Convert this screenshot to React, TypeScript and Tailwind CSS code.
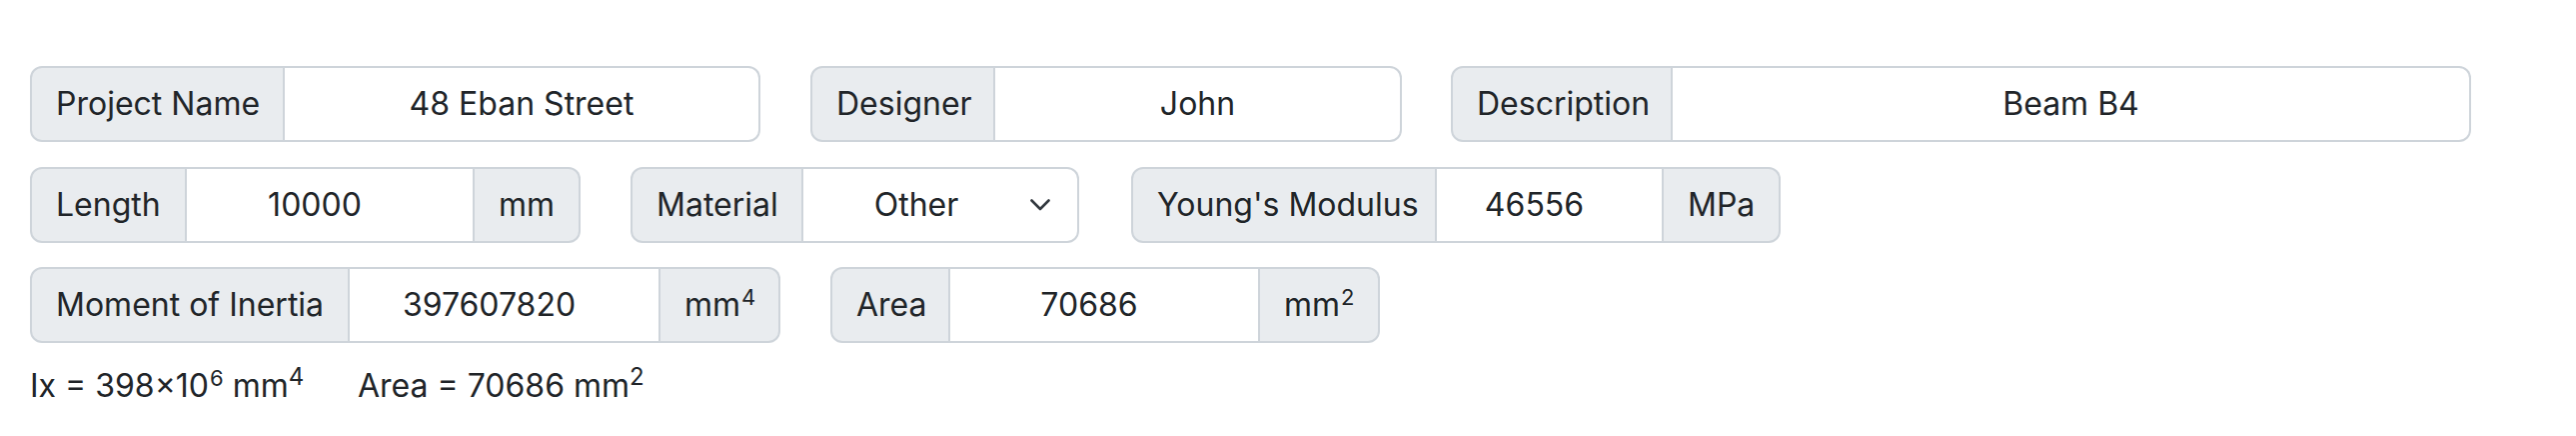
import React from "react";

const font = { fontFamily: "Inter, 'Noto Sans', sans-serif" };

function Label({ w, children }: { w: string; children: React.ReactNode }) {
  return (
    <div
      className={`${w} h-[76px] shrink-0 flex items-center px-[24px] bg-[#e9ecef] border-2 border-[#ced4da] rounded-l-[12px] text-[32px] leading-[48px] text-[#212529] whitespace-nowrap`}
    >
      {children}
    </div>
  );
}

function Field({ w, children, last, num }: { w: string; children: React.ReactNode; last?: boolean; num?: boolean }) {
  return (
    <div
      className={`${w} h-[76px] shrink-0 flex items-center justify-center bg-white border-2 border-l-0 border-[#ced4da] text-[32px] leading-[48px] text-[#212529] whitespace-nowrap pl-[24px] ${num ? "pr-[54px]" : "pr-[24px]"} ${last ? "rounded-r-[12px]" : ""}`}
    >
      {children}
    </div>
  );
}

function Addon({ w, children }: { w: string; children: React.ReactNode }) {
  return (
    <div
      className={`${w} h-[76px] shrink-0 flex items-center px-[24px] bg-[#e9ecef] border-2 border-l-0 border-[#ced4da] rounded-r-[12px] text-[32px] leading-[48px] text-[#212529] whitespace-nowrap`}
    >
      <span>{children}</span>
    </div>
  );
}

function SmallSup({ children }: { children: React.ReactNode }) {
  return <span className="text-[22px] leading-none align-[11px] ml-[1px]">{children}</span>;
}

export default function App() {
  return (
    <div className="w-[2578px] h-[436px] bg-white pt-[66px] pl-[30px]" style={font}>
      <div className="flex flex-col gap-[24.5px]">
        <div className="flex">
          <div className="flex">
            <Label w="w-[255px]">Project Name</Label>
            <Field w="w-[476px]" last>48 Eban Street</Field>
          </div>
          <div className="flex ml-[50px]">
            <Label w="w-[185px]">Designer</Label>
            <Field w="w-[407px]" last>John</Field>
          </div>
          <div className="flex ml-[49px]">
            <Label w="w-[222px]">Description</Label>
            <Field w="w-[799px]" last>Beam B4</Field>
          </div>
        </div>

        <div className="flex">
          <div className="flex">
            <Label w="w-[157px]">Length</Label>
            <Field w="w-[288px]" num>10000</Field>
            <Addon w="w-[106px]">mm</Addon>
          </div>
          <div className="flex ml-[50px]">
            <Label w="w-[173px]">Material</Label>
            <div className="relative w-[276px] h-[76px] shrink-0 flex items-center justify-center bg-white border-2 border-l-0 border-[#ced4da] rounded-r-[12px] text-[32px] leading-[48px] text-[#212529] pl-[24px] pr-[72px]">
              Other
              <svg
                className="absolute right-[27px] top-1/2 -translate-y-1/2"
                width="20"
                height="12"
                viewBox="0 0 20 12"
                fill="none"
              >
                <path d="M1.5 1.5 10 10 18.5 1.5" stroke="#343a40" strokeWidth="2.6" strokeLinecap="round" strokeLinejoin="round" />
              </svg>
            </div>
          </div>
          <div className="flex ml-[52px]">
            <Label w="w-[306px]">Young's Modulus</Label>
            <Field w="w-[227px]" num>46556</Field>
            <Addon w="w-[117px]">MPa</Addon>
          </div>
        </div>

        <div className="flex">
          <div className="flex">
            <Label w="w-[320px]">Moment of Inertia</Label>
            <Field w="w-[311px]" num>397607820</Field>
            <Addon w="w-[120px]">
              mm<SmallSup>4</SmallSup>
            </Addon>
          </div>
          <div className="flex ml-[50px]">
            <Label w="w-[120px]">Area</Label>
            <Field w="w-[310px]" num>70686</Field>
            <Addon w="w-[120px]">
              mm<SmallSup>2</SmallSup>
            </Addon>
          </div>
        </div>
      </div>

      <div className="mt-[19px] text-[32px] leading-[48px] text-[#212529] whitespace-nowrap">
        <span className="inline-block w-[328px]">
          Ix = 398×10<SmallSup>6</SmallSup> mm<sup>4</sup>
        </span>
        <span>
          Area = 70686 mm<sup>2</sup>
        </span>
      </div>
    </div>
  );
}
